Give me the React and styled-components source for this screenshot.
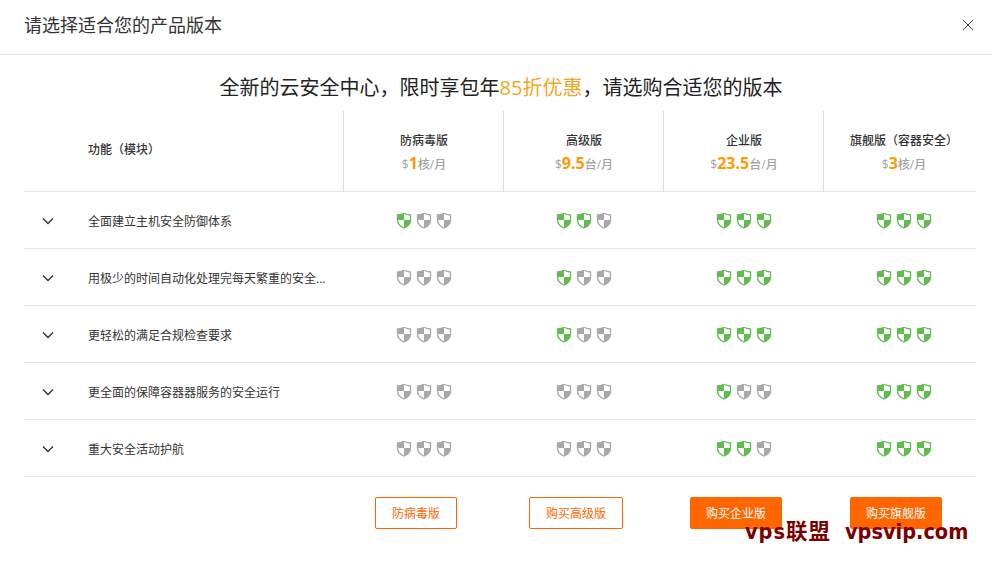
import React from "react";
import styled, { createGlobalStyle } from "styled-components";

const GlobalStyle = createGlobalStyle`
  html, body {
    margin: 0;
    padding: 0;
    background: #fff;
    font-family: "Open Sans", "Noto Sans CJK SC", sans-serif;
  }
`;

const plans = [
  { name: "防病毒版", price: "1", unit: "核/月" },
  { name: "高级版", price: "9.5", unit: "台/月" },
  { name: "企业版", price: "23.5", unit: "台/月" },
  { name: "旗舰版（容器安全）", price: "3", unit: "核/月" },
];

const rows = [
  { label: "全面建立主机安全防御体系", levels: [1, 2, 3, 3] },
  { label: "用极少的时间自动化处理完每天繁重的安全...", levels: [0, 1, 3, 3] },
  { label: "更轻松的满足合规检查要求", levels: [0, 1, 3, 3] },
  { label: "更全面的保障容器器服务的安全运行", levels: [0, 0, 1, 3] },
  { label: "重大安全活动护航", levels: [0, 0, 2, 3] },
];

const buttons = [
  { text: "防病毒版", width: 82 },
  { text: "购买高级版", width: 94 },
  { text: "购买企业版", width: 92, solid: true },
  { text: "购买旗舰版", width: 92, solid: true },
];

const Page = styled.div`
  position: relative;
  width: 992px;
  height: 569px;
  overflow: hidden;
  background: #fff;
`;

const Header = styled.header`
  height: 50px;
  padding: 0 18px 4px 24px;
  display: flex;
  align-items: center;
  justify-content: space-between;
  border-bottom: 1px solid #e5e5e5;
`;

const Title = styled.h1`
  margin: 0 0 3px 0;
  font-size: 18px;
  font-weight: 400;
  color: #333;
`;

const Close = styled.button`
  width: 12px;
  height: 12px;
  padding: 0;
  border: 0;
  background: none;
  display: flex;
  svg {
    display: block;
  }
`;

const Slogan = styled.div`
  height: 50px;
  padding: 6px 0 0 10px;
  display: flex;
  align-items: center;
  justify-content: center;
  font-size: 20px;
  color: #222;
  em {
    font-style: normal;
    color: #f5a623;
  }
`;

const Table = styled.div`
  margin: 0 16px 0 24px;
  width: 952px;
`;

const Row = styled.div`
  display: grid;
  grid-template-columns: 320px repeat(4, 160px);
  height: ${({ $head }) => ($head ? 80 : 54)}px;
  padding-top: ${({ $head }) => ($head ? 0 : 2)}px;
  border-bottom: 1px solid #e5e5e5;
  align-items: center;
`;

const FeatureHead = styled.div`
  padding: 0 0 5px 64px;
  font-size: 12px;
  font-weight: 500;
  color: #333;
`;

const PlanCell = styled.div`
  height: 100%;
  box-sizing: border-box;
  margin-left: -1px;
  padding-top: 5px;
  border-left: 1px solid #ddd;
  display: flex;
  flex-direction: column;
  align-items: center;
  justify-content: center;
  gap: 3px;
`;

const PlanName = styled.div`
  font-size: 12px;
  font-weight: 500;
  color: #333;
  line-height: 18px;
`;

const PlanPrice = styled.div`
  font-size: 12px;
  font-weight: 500;
  color: #a3a3a3;
  line-height: 20px;
  strong {
    font-size: 16px;
    font-weight: 700;
    color: #f90;
  }
`;

const Feature = styled.div`
  display: flex;
  align-items: center;
  font-size: 12px;
  color: #333;
`;

const Chevron = styled.span`
  width: 64px;
  padding-left: 18px;
  box-sizing: border-box;
  display: flex;
  svg {
    display: block;
  }
`;

const Shields = styled.div`
  display: flex;
  justify-content: center;
  gap: 4px;
`;

const Footer = styled.div`
  margin-left: 24px;
  padding-top: 20px;
  display: grid;
  grid-template-columns: 320px repeat(4, 160px);
`;

const BuyCell = styled.div`
  grid-column: ${({ $col }) => $col + 2};
  padding-right: 16px;
  display: flex;
  justify-content: center;
`;

const BuyButton = styled.button`
  width: ${({ $width }) => $width}px;
  height: 32px;
  padding: 0;
  box-sizing: border-box;
  border: 1px solid #f60;
  border-radius: 2px;
  background: ${({ $solid }) => ($solid ? "#f60" : "#fff")};
  color: ${({ $solid }) => ($solid ? "#fff" : "#f60")};
  font-family: inherit;
  font-size: 12px;
`;

const Watermark = styled.div`
  position: absolute;
  left: 745px;
  top: 519px;
  display: flex;
  gap: 14px;
  font-family: "DejaVu Sans", "Noto Sans CJK SC", sans-serif;
  font-stretch: condensed;
  font-size: 21.5px;
  font-weight: 700;
  line-height: 26px;
  color: #7a0000;
  white-space: pre;
`;

const WatermarkName = styled.span`
  letter-spacing: 1px;
`;

const Shield = ({ on }) => {
  const color = on ? "#62bb4e" : "#a8a8a8";
  return (
    <svg width="16" height="16" viewBox="0 1 16 16">
      <path
        d="M8 1C10 2.5 12.5 3 14.5 3V8C14.5 12 11.5 14.5 8 16 4.5 14.5 1.5 12 1.5 8V3C3.5 3 6 2.5 8 1Z"
        fill="#fff"
        stroke={color}
        strokeWidth="1.3"
      />
      <path d="M8 1V8H1.5V3C3.5 3 6 2.5 8 1ZM8 8H14.5C14.5 12 11.5 14.5 8 16Z" fill={color} />
    </svg>
  );
};

export default function App() {
  return (
    <Page>
      <GlobalStyle />
      <Header>
        <Title>请选择适合您的产品版本</Title>
        <Close aria-label="关闭">
          <svg width="12" height="12" viewBox="0 0 12 12">
            <path d="M1 1l10 10M11 1 1 11" stroke="#444" strokeWidth="1" fill="none" />
          </svg>
        </Close>
      </Header>
      <Slogan>
        <span>
          全新的云安全中心，限时享包年<em>85折优惠</em>，请选购合适您的版本
        </span>
      </Slogan>
      <Table>
        <Row $head>
          <FeatureHead>功能（模块）</FeatureHead>
          {plans.map((p) => (
            <PlanCell key={p.name}>
              <PlanName>{p.name}</PlanName>
              <PlanPrice>
                $<strong>{p.price}</strong>
                {p.unit}
              </PlanPrice>
            </PlanCell>
          ))}
        </Row>
        {rows.map((r) => (
          <Row key={r.label}>
            <Feature>
              <Chevron>
                <svg width="12" height="8" viewBox="0 0 12 8">
                  <path d="M1 1.5l5 5 5-5" stroke="#333" strokeWidth="1.4" fill="none" />
                </svg>
              </Chevron>
              {r.label}
            </Feature>
            {r.levels.map((level, i) => (
              <Shields key={i}>
                {[0, 1, 2].map((n) => (
                  <Shield key={n} on={n < level} />
                ))}
              </Shields>
            ))}
          </Row>
        ))}
      </Table>
      <Footer>
        {buttons.map((b, i) => (
          <BuyCell key={b.text} $col={i}>
            <BuyButton $width={b.width} $solid={b.solid}>
              {b.text}
            </BuyButton>
          </BuyCell>
        ))}
      </Footer>
      <Watermark>
        <WatermarkName>vps联盟</WatermarkName>
        <span>vpsvip.com</span>
      </Watermark>
    </Page>
  );
}
